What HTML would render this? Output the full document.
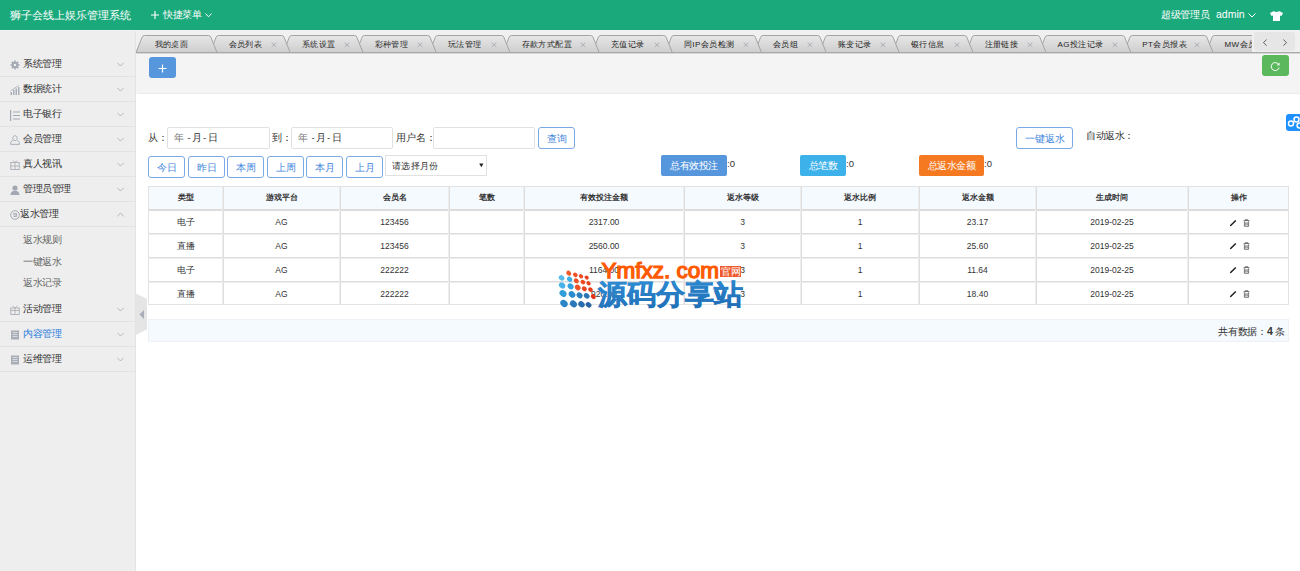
<!DOCTYPE html>
<html><head><meta charset="utf-8">
<style>
*{box-sizing:border-box;margin:0;padding:0}
html,body{width:1300px;height:571px;overflow:hidden;background:#fff;font-family:"Liberation Sans",sans-serif;color:#333}
.a{position:absolute;white-space:nowrap}
#hd{position:absolute;left:0;top:0;width:1300px;height:30px;background:#19a97b}
#hdline{position:absolute;left:0;top:30px;width:1300px;height:1px;background:#f4f1f2}
#side{position:absolute;left:0;top:31px;width:136px;height:540px;background:#eeeeee;border-right:1px solid #e3e3e3}
.mi{position:absolute;left:0;width:135px;height:25px;border-bottom:1px solid #e2e2e2}
.mi .t{position:absolute;left:23px;top:-1px;line-height:25px;font-size:10px;letter-spacing:-0.5px;color:#333}
.mi .ic{position:absolute;left:10px;top:8px}
.mi .cv{position:absolute;left:117px;top:10px}
.sub{position:absolute;left:23px;font-size:10px;letter-spacing:-0.5px;color:#666;line-height:14px}
#tabbar{position:absolute;left:136px;top:31px;width:1164px;height:22px;background:#f0f0f0}
#tabs{position:absolute;left:136px;top:31px;width:1116px;height:22px;overflow:hidden}
#tabs .tt{position:absolute;top:5px;line-height:18px;font-size:8px;letter-spacing:0.45px;color:#222;white-space:nowrap}
#tabs .x{position:absolute;top:5px;line-height:17px;font-size:11px;color:#b0b0b0}
#tabline{position:absolute;left:136px;top:52px;width:1164px;height:1px;background:#a9a9a9;border-bottom:1px solid #d6d6d6;box-sizing:content-box}
#band{position:absolute;left:136px;top:54px;width:1164px;height:40px;background:#f4f4f4;border-bottom:1px solid #ececec;border-bottom-left-radius:3px}
.btn-o{position:absolute;height:22px;border:1px solid #7aaae6;border-radius:3px;color:#3f86dd;font-size:9.5px;line-height:21px;text-align:center;background:#fff}
.inp{position:absolute;height:22px;border:1px solid #e1e1e1;border-radius:2px;background:#fff;font-size:9.5px;line-height:20px;color:#333}
.lbl{position:absolute;font-size:9.5px;color:#333;line-height:12px}
.badge{position:absolute;top:155px;height:21px;border-radius:2px;color:#fff;font-size:10px;letter-spacing:-0.5px;line-height:21px;text-align:center}
.th{position:absolute;text-align:center;font-size:8px;font-weight:bold;line-height:12px;color:#333}
.td{position:absolute;text-align:center;font-size:8.5px;line-height:12px;color:#333}
</style></head>
<body>
<div id="hd">
<div class="a" style="left:10px;top:8px;font-size:11px;line-height:14px;color:#fff">狮子会线上娱乐管理系统</div>
<svg class="a" style="left:151px;top:11px" width="8" height="8"><path d="M4 0V8M0 4H8" stroke="#fff" stroke-width="1.15"/></svg>
<div class="a" style="left:163px;top:9px;font-size:10px;letter-spacing:-0.5px;line-height:12px;color:#fff">快捷菜单</div>
<svg class="a" style="left:205px;top:13px" width="7" height="5"><path d="M0.5 0.5L3.5 3.8L6.5 0.5" stroke="#fff" fill="none" stroke-width="1"/></svg>
<div class="a" style="left:1161px;top:9px;font-size:10px;letter-spacing:-0.3px;line-height:12px;color:#fff">超级管理员</div>
<div class="a" style="left:1216px;top:8px;font-size:10.5px;line-height:13px;color:#fff">admin</div>
<svg class="a" style="left:1248px;top:13px" width="8" height="5"><path d="M0.5 0.5L4 4L7.5 0.5" stroke="#fff" fill="none" stroke-width="1"/></svg>
<svg class="a" style="left:1270px;top:11px" width="13" height="10"><path d="M4 0L0 2L1.5 5L3 4.5V10H10V4.5L11.5 5L13 2L9 0C8.5 1.2 4.5 1.2 4 0Z" fill="#fff"/></svg>
</div>
<div id="hdline"></div>
<div id="side"></div>
<div id="menu">
<div class="mi" style="top:52px"><svg class="ic" width="10" height="10" viewBox="0 0 10 10"><g fill="#a3a8b3"><circle cx="5" cy="5" r="3.3"/><rect x="4.2" y="0.5" width="1.6" height="9"/><rect x="0.5" y="4.2" width="9" height="1.6"/><rect x="4.2" y="0.5" width="1.6" height="9" transform="rotate(45 5 5)"/><rect x="4.2" y="0.5" width="1.6" height="9" transform="rotate(-45 5 5)"/></g><circle cx="5" cy="5" r="1.3" fill="#eee"/></svg><span class="t" style="color:#333">系统管理</span><svg class="cv" width="7" height="5" viewBox="0 0 7 5"><path d="M0.3 0.8 L3.5 4 L6.7 0.8" stroke="#aaa" stroke-width="0.8" fill="none"/></svg></div>
<div class="mi" style="top:77px"><svg class="ic" width="10" height="10" viewBox="0 0 10 10"><g fill="#a8adb8"><rect x="0.5" y="7" width="1.5" height="3"/><rect x="3" y="5" width="1.5" height="5"/><rect x="5.5" y="3.5" width="1.5" height="6.5"/><rect x="8" y="2" width="1.5" height="8"/></g><path d="M0.5 6L8.5 0.5" stroke="#aaa" stroke-width="0.8"/></svg><span class="t" style="color:#333">数据统计</span><svg class="cv" width="7" height="5" viewBox="0 0 7 5"><path d="M0.3 0.8 L3.5 4 L6.7 0.8" stroke="#aaa" stroke-width="0.8" fill="none"/></svg></div>
<div class="mi" style="top:102px"><svg class="ic" width="10" height="11" viewBox="0 0 10 11"><g fill="#a3a8b3"><rect x="0" y="0" width="1.2" height="11"/><rect x="3" y="1.5" width="7" height="1"/><rect x="3" y="5" width="7" height="1"/><rect x="3" y="8.5" width="7" height="1"/></g></svg><span class="t" style="color:#333">电子银行</span><svg class="cv" width="7" height="5" viewBox="0 0 7 5"><path d="M0.3 0.8 L3.5 4 L6.7 0.8" stroke="#aaa" stroke-width="0.8" fill="none"/></svg></div>
<div class="mi" style="top:127px"><svg class="ic" width="10" height="10" viewBox="0 0 10 10"><path d="M5 0.7C6.4 0.7 7.2 1.8 7.2 3.2C7.2 4.6 6.4 5.6 5 5.6C3.6 5.6 2.8 4.6 2.8 3.2C2.8 1.8 3.6 0.7 5 0.7ZM2.8 5.4L0.7 7.2V9.4H9.3V7.2L7.2 5.4" stroke="#a3a8b3" stroke-width="0.9" fill="none"/></svg><span class="t" style="color:#333">会员管理</span><svg class="cv" width="7" height="5" viewBox="0 0 7 5"><path d="M0.3 0.8 L3.5 4 L6.7 0.8" stroke="#aaa" stroke-width="0.8" fill="none"/></svg></div>
<div class="mi" style="top:152px"><svg class="ic" width="10" height="10" viewBox="0 0 10 10"><rect x="0.8" y="2.5" width="8.4" height="7" stroke="#a8adb8" stroke-width="0.9" fill="none"/><path d="M3 0.5L5 2.5L7 0.5M0.8 6H9.2M5 2.5V9.5" stroke="#aaa" stroke-width="0.8" fill="none"/></svg><span class="t" style="color:#333">真人视讯</span><svg class="cv" width="7" height="5" viewBox="0 0 7 5"><path d="M0.3 0.8 L3.5 4 L6.7 0.8" stroke="#aaa" stroke-width="0.8" fill="none"/></svg></div>
<div class="mi" style="top:177px"><svg class="ic" width="10" height="10" viewBox="0 0 10 10"><circle cx="5" cy="3" r="2.6" fill="#a3a8b3"/><path d="M0.5 10C0.5 7 2.5 5.8 5 5.8C7.5 5.8 9.5 7 9.5 10Z" fill="#a3a8b3"/></svg><span class="t" style="color:#333">管理员管理</span><svg class="cv" width="7" height="5" viewBox="0 0 7 5"><path d="M0.3 0.8 L3.5 4 L6.7 0.8" stroke="#aaa" stroke-width="0.8" fill="none"/></svg></div>
<div class="mi" style="top:202px"><svg class="ic" width="10" height="10" viewBox="0 0 10 10"><circle cx="5" cy="5" r="4.3" stroke="#9aa0ac" stroke-width="0.9" fill="none"/><path d="M3.2 3.5H6.5V6.5H3.5M3.2 5H6" stroke="#9aa0ac" stroke-width="0.8" fill="none"/></svg><span class="t" style="color:#333;left:20px">返水管理</span><svg class="cv" width="7" height="5" viewBox="0 0 7 5"><path d="M0.3 4.5 L3.5 1 L6.7 4.5" stroke="#aaa" stroke-width="0.8" fill="none"/></svg></div>
<div class="mi" style="top:297px"><svg class="ic" width="10" height="10" viewBox="0 0 10 10"><rect x="0.8" y="3" width="8.4" height="6.5" stroke="#a8adb8" stroke-width="0.9" fill="none"/><path d="M0.8 5.5H9.2M5 3V9.5M2.5 1L5 3L7.5 1" stroke="#aaa" stroke-width="0.8" fill="none"/></svg><span class="t" style="color:#333">活动管理</span><svg class="cv" width="7" height="5" viewBox="0 0 7 5"><path d="M0.3 0.8 L3.5 4 L6.7 0.8" stroke="#aaa" stroke-width="0.8" fill="none"/></svg></div>
<div class="mi" style="top:322px"><svg class="ic" width="10" height="10" viewBox="0 0 10 10"><rect x="1" y="0.5" width="8" height="9" fill="#a8adb8"/><path d="M2.5 2.5H7.5M2.5 4.5H7.5M2.5 6.5H7.5" stroke="#eee" stroke-width="0.7"/></svg><span class="t" style="color:#2b7ce0">内容管理</span><svg class="cv" width="7" height="5" viewBox="0 0 7 5"><path d="M0.3 0.8 L3.5 4 L6.7 0.8" stroke="#aaa" stroke-width="0.8" fill="none"/></svg></div>
<div class="mi" style="top:347px"><svg class="ic" width="10" height="10" viewBox="0 0 10 10"><rect x="1" y="0.5" width="8" height="9" fill="#a8adb8"/><path d="M2.5 2.5H7.5M2.5 4.5H7.5M2.5 6.5H7.5" stroke="#eee" stroke-width="0.7"/></svg><span class="t" style="color:#333">运维管理</span><svg class="cv" width="7" height="5" viewBox="0 0 7 5"><path d="M0.3 0.8 L3.5 4 L6.7 0.8" stroke="#aaa" stroke-width="0.8" fill="none"/></svg></div>
<div class="sub" style="top:233px">返水规则</div>
<div class="sub" style="top:255px">一键返水</div>
<div class="sub" style="top:276px">返水记录</div>
</div>
<svg class="a" style="left:136px;top:293px" width="12" height="43" viewBox="0 0 12 43"><path d="M0 0.5L11 6V36.5L0 42Z" fill="#e5e5e5"/><path d="M8 17L3.5 21.5L8 26Z" fill="#a8adb8"/></svg>
<div id="tabbar"></div>
<div id="tabs"><svg class="a" style="left:0;top:0" width="1116" height="23" viewBox="0 0 1116 23"><defs><linearGradient id="tg" x1="0" y1="0" x2="0" y2="1"><stop offset="0" stop-color="#e7e7e7"/><stop offset="1" stop-color="#cecece"/></linearGradient></defs><path d="M1070.0 21.5 L1076.1 6.3 Q1076.7 4.5 1078.6 4.5 L1157.4 4.5 Q1159.3 4.5 1159.9 6.3 L1166.0 21.5 Z" fill="url(#tg)" stroke="#a3a3a3" stroke-width="1"/><path d="M987.8 21.5 L993.9 6.3 Q994.5 4.5 996.4 4.5 L1068.4 4.5 Q1070.3 4.5 1070.9 6.3 L1077.0 21.5 Z" fill="url(#tg)" stroke="#a3a3a3" stroke-width="1"/><path d="M903.0 21.5 L909.1 6.3 Q909.7 4.5 911.6 4.5 L986.2 4.5 Q988.1 4.5 988.7 6.3 L994.8 21.5 Z" fill="url(#tg)" stroke="#a3a3a3" stroke-width="1"/><path d="M830.0 21.5 L836.1 6.3 Q836.7 4.5 838.6 4.5 L901.4 4.5 Q903.3 4.5 903.9 6.3 L910.0 21.5 Z" fill="url(#tg)" stroke="#a3a3a3" stroke-width="1"/><path d="M756.2 21.5 L762.3 6.3 Q762.9 4.5 764.8 4.5 L828.4 4.5 Q830.3 4.5 830.9 6.3 L837.0 21.5 Z" fill="url(#tg)" stroke="#a3a3a3" stroke-width="1"/><path d="M683.2 21.5 L689.3 6.3 Q689.9 4.5 691.8 4.5 L754.6 4.5 Q756.5 4.5 757.1 6.3 L763.2 21.5 Z" fill="url(#tg)" stroke="#a3a3a3" stroke-width="1"/><path d="M618.5 21.5 L624.6 6.3 Q625.2 4.5 627.1 4.5 L681.6 4.5 Q683.5 4.5 684.1 6.3 L690.2 21.5 Z" fill="url(#tg)" stroke="#a3a3a3" stroke-width="1"/><path d="M529.3 21.5 L535.4 6.3 Q536.0 4.5 537.9 4.5 L616.9 4.5 Q618.8 4.5 619.4 6.3 L625.5 21.5 Z" fill="url(#tg)" stroke="#a3a3a3" stroke-width="1"/><path d="M456.2 21.5 L462.3 6.3 Q462.9 4.5 464.8 4.5 L527.7 4.5 Q529.6 4.5 530.2 6.3 L536.3 21.5 Z" fill="url(#tg)" stroke="#a3a3a3" stroke-width="1"/><path d="M367.0 21.5 L373.1 6.3 Q373.7 4.5 375.6 4.5 L454.6 4.5 Q456.5 4.5 457.1 6.3 L463.2 21.5 Z" fill="url(#tg)" stroke="#a3a3a3" stroke-width="1"/><path d="M293.2 21.5 L299.3 6.3 Q299.9 4.5 301.8 4.5 L365.4 4.5 Q367.3 4.5 367.9 6.3 L374.0 21.5 Z" fill="url(#tg)" stroke="#a3a3a3" stroke-width="1"/><path d="M220.0 21.5 L226.1 6.3 Q226.7 4.5 228.6 4.5 L291.6 4.5 Q293.5 4.5 294.1 6.3 L300.2 21.5 Z" fill="url(#tg)" stroke="#a3a3a3" stroke-width="1"/><path d="M147.2 21.5 L153.3 6.3 Q153.9 4.5 155.8 4.5 L218.4 4.5 Q220.3 4.5 220.9 6.3 L227.0 21.5 Z" fill="url(#tg)" stroke="#a3a3a3" stroke-width="1"/><path d="M74.0 21.5 L80.1 6.3 Q80.7 4.5 82.6 4.5 L145.6 4.5 Q147.5 4.5 148.1 6.3 L154.2 21.5 Z" fill="url(#tg)" stroke="#a3a3a3" stroke-width="1"/><path d="M0.0 21.5 L6.1 6.3 Q6.7 4.5 8.6 4.5 L72.4 4.5 Q74.3 4.5 74.9 6.3 L81.0 21.5 Z" fill="url(#tg)" stroke="#a3a3a3" stroke-width="1"/></svg><span class="tt" style="left:18.5px">我的桌面</span><span class="tt" style="left:92.5px">会员列表</span><svg class="a" style="left:135.4px;top:11px" width="6" height="6" viewBox="0 0 6 6"><path d="M0.7 0.6L5.3 4.9M5.3 0.6L0.7 4.9" stroke="#a3a7b0" stroke-width="0.85"/></svg><span class="tt" style="left:165.7px">系统设置</span><svg class="a" style="left:208.2px;top:11px" width="6" height="6" viewBox="0 0 6 6"><path d="M0.7 0.6L5.3 4.9M5.3 0.6L0.7 4.9" stroke="#a3a7b0" stroke-width="0.85"/></svg><span class="tt" style="left:238.5px">彩种管理</span><svg class="a" style="left:281.4px;top:11px" width="6" height="6" viewBox="0 0 6 6"><path d="M0.7 0.6L5.3 4.9M5.3 0.6L0.7 4.9" stroke="#a3a7b0" stroke-width="0.85"/></svg><span class="tt" style="left:311.7px">玩法管理</span><svg class="a" style="left:355.2px;top:11px" width="6" height="6" viewBox="0 0 6 6"><path d="M0.7 0.6L5.3 4.9M5.3 0.6L0.7 4.9" stroke="#a3a7b0" stroke-width="0.85"/></svg><span class="tt" style="left:385.5px">存款方式配置</span><svg class="a" style="left:444.4px;top:11px" width="6" height="6" viewBox="0 0 6 6"><path d="M0.7 0.6L5.3 4.9M5.3 0.6L0.7 4.9" stroke="#a3a7b0" stroke-width="0.85"/></svg><span class="tt" style="left:474.7px">充值记录</span><svg class="a" style="left:517.5px;top:11px" width="6" height="6" viewBox="0 0 6 6"><path d="M0.7 0.6L5.3 4.9M5.3 0.6L0.7 4.9" stroke="#a3a7b0" stroke-width="0.85"/></svg><span class="tt" style="left:547.8px">同IP会员检测</span><svg class="a" style="left:606.7px;top:11px" width="6" height="6" viewBox="0 0 6 6"><path d="M0.7 0.6L5.3 4.9M5.3 0.6L0.7 4.9" stroke="#a3a7b0" stroke-width="0.85"/></svg><span class="tt" style="left:637.0px">会员组</span><svg class="a" style="left:671.4px;top:11px" width="6" height="6" viewBox="0 0 6 6"><path d="M0.7 0.6L5.3 4.9M5.3 0.6L0.7 4.9" stroke="#a3a7b0" stroke-width="0.85"/></svg><span class="tt" style="left:701.7px">账变记录</span><svg class="a" style="left:744.4px;top:11px" width="6" height="6" viewBox="0 0 6 6"><path d="M0.7 0.6L5.3 4.9M5.3 0.6L0.7 4.9" stroke="#a3a7b0" stroke-width="0.85"/></svg><span class="tt" style="left:774.7px">银行信息</span><svg class="a" style="left:818.2px;top:11px" width="6" height="6" viewBox="0 0 6 6"><path d="M0.7 0.6L5.3 4.9M5.3 0.6L0.7 4.9" stroke="#a3a7b0" stroke-width="0.85"/></svg><span class="tt" style="left:848.5px">注册链接</span><svg class="a" style="left:891.2px;top:11px" width="6" height="6" viewBox="0 0 6 6"><path d="M0.7 0.6L5.3 4.9M5.3 0.6L0.7 4.9" stroke="#a3a7b0" stroke-width="0.85"/></svg><span class="tt" style="left:921.5px">AG投注记录</span><svg class="a" style="left:976.0px;top:11px" width="6" height="6" viewBox="0 0 6 6"><path d="M0.7 0.6L5.3 4.9M5.3 0.6L0.7 4.9" stroke="#a3a7b0" stroke-width="0.85"/></svg><span class="tt" style="left:1006.3px">PT会员报表</span><svg class="a" style="left:1058.2px;top:11px" width="6" height="6" viewBox="0 0 6 6"><path d="M0.7 0.6L5.3 4.9M5.3 0.6L0.7 4.9" stroke="#a3a7b0" stroke-width="0.85"/></svg><span class="tt" style="left:1088.5px">MW会员报表</span><svg class="a" style="left:1147.2px;top:11px" width="6" height="6" viewBox="0 0 6 6"><path d="M0.7 0.6L5.3 4.9M5.3 0.6L0.7 4.9" stroke="#a3a7b0" stroke-width="0.85"/></svg></div>
<div id="tabline"></div>
<div id="band"></div>
<div class="a" style="left:1254px;top:32px;width:41px;height:19px;background:#e6e6e6;border-radius:3px"></div>
<svg class="a" style="left:1262px;top:39px" width="6" height="8"><path d="M4.6 0.6L1.4 3.6L4.6 6.6" stroke="#555" stroke-width="0.9" fill="none"/></svg>
<svg class="a" style="left:1282px;top:39px" width="6" height="8"><path d="M1.4 0.6L4.6 3.6L1.4 6.6" stroke="#555" stroke-width="0.9" fill="none"/></svg>
<div class="a" style="left:149px;top:57px;width:27px;height:21px;background:#5596dd;border-radius:3px"></div>
<svg class="a" style="left:158px;top:64px" width="9" height="9"><path d="M4.5 0.5V8.5M0.5 4.5H8.5" stroke="#fff" stroke-width="1.2"/></svg>
<div class="a" style="left:1262px;top:55px;width:27px;height:21px;background:#5cb85c;border-radius:3px"></div>
<svg class="a" style="left:1270px;top:61px" width="11" height="11" viewBox="0 0 11 11"><path d="M8.6 3.4A4 4 0 1 0 9.1 6.6" stroke="#fff" stroke-width="1" fill="none"/><path d="M9.6 1.6L9.5 4.6L6.6 4.2Z" fill="#fff"/></svg>
<div id="form">
<div class="lbl" style="left:148px;top:131.5px">从：</div>
<div class="inp" style="left:167px;top:127px;width:103px"><span class="a" style="left:6px;top:0;color:#777">年</span><span class="a" style="left:19.5px;top:0">-</span><span class="a" style="left:24px;top:0">月</span><span class="a" style="left:35px;top:0">-</span><span class="a" style="left:39.5px;top:0">日</span></div>
<div class="lbl" style="left:272px;top:131.5px">到：</div>
<div class="inp" style="left:291px;top:127px;width:102px"><span class="a" style="left:6px;top:0;color:#777">年</span><span class="a" style="left:19.5px;top:0">-</span><span class="a" style="left:24px;top:0">月</span><span class="a" style="left:35px;top:0">-</span><span class="a" style="left:39.5px;top:0">日</span></div>
<div class="lbl" style="left:396px;top:131.5px">用户名：</div>
<div class="inp" style="left:433px;top:127px;width:102px"></div>
<div class="btn-o" style="left:538px;top:127px;width:37px">查询</div>
<div class="btn-o" style="left:148px;top:156px;width:37px">今日</div>
<div class="btn-o" style="left:188px;top:156px;width:37px">昨日</div>
<div class="btn-o" style="left:227px;top:156px;width:37px">本周</div>
<div class="btn-o" style="left:267px;top:156px;width:37px">上周</div>
<div class="btn-o" style="left:306px;top:156px;width:37px">本月</div>
<div class="btn-o" style="left:346px;top:156px;width:37px">上月</div>
<div class="inp" style="left:385px;top:155px;width:102px;height:21px;border-radius:0;line-height:19px"><span class="a" style="left:6px;top:1px;font-size:9px;letter-spacing:0.3px">请选择月份</span><svg class="a" style="left:92.5px;top:7px" width="5" height="5"><path d="M0.2 0.4H4.4L2.3 4.3Z" fill="#222"/></svg></div>
<div class="btn-o" style="left:1016px;top:127px;width:57px">一键返水</div>
<div class="lbl" style="left:1086px;top:130px;letter-spacing:-0.4px">自动返水：</div>
<div class="badge" style="left:661px;width:66px;background:#5596dd">总有效投注</div><div class="lbl" style="left:727px;top:158px">:0</div>
<div class="badge" style="left:800px;width:46px;background:#3cb1ea">总笔数</div><div class="lbl" style="left:846px;top:158px">:0</div>
<div class="badge" style="left:919px;width:65px;background:#f47920">总返水金额</div><div class="lbl" style="left:984px;top:158px">:0</div>
<div class="a" style="left:1286px;top:114px;width:20px;height:17px;background:#1e90ff;border-radius:3px"></div>
<svg class="a" style="left:1286px;top:114px" width="14" height="17" viewBox="0 0 14 17"><circle cx="5" cy="9.5" r="2.5" stroke="#fff" stroke-width="1.5" fill="none"/><circle cx="10.5" cy="5.6" r="2.5" stroke="#fff" stroke-width="1.5" fill="none"/><circle cx="13.6" cy="11.4" r="2.5" stroke="#fff" stroke-width="1.5" fill="none"/></svg>
</div>
<div id="tbl">
<div class="a" style="left:148px;top:186px;width:1141px;height:119px;border:1px solid #e3e3e3;background:#fff"></div>
<div class="a" style="left:149px;top:187px;width:1139px;height:22px;background:#f5faff"></div>
<div class="a" style="left:149px;top:209px;width:1139px;height:2px;background:#dcdcdc"></div>
<div class="a" style="left:149px;top:233px;width:1139px;height:1px;background:#dedede;border-bottom:1px solid #ededed;box-sizing:content-box"></div>
<div class="a" style="left:149px;top:257px;width:1139px;height:1px;background:#dedede;border-bottom:1px solid #ededed;box-sizing:content-box"></div>
<div class="a" style="left:149px;top:281px;width:1139px;height:1px;background:#dedede;border-bottom:1px solid #ededed;box-sizing:content-box"></div>
<div class="a" style="left:222px;top:187px;width:1px;height:117px;background:#dedede;border-left:1px solid #ededed;box-sizing:content-box"></div>
<div class="a" style="left:339px;top:187px;width:1px;height:117px;background:#dedede;border-left:1px solid #ededed;box-sizing:content-box"></div>
<div class="a" style="left:448px;top:187px;width:1px;height:117px;background:#dedede;border-left:1px solid #ededed;box-sizing:content-box"></div>
<div class="a" style="left:523px;top:187px;width:1px;height:117px;background:#dedede;border-left:1px solid #ededed;box-sizing:content-box"></div>
<div class="a" style="left:683px;top:187px;width:1px;height:117px;background:#dedede;border-left:1px solid #ededed;box-sizing:content-box"></div>
<div class="a" style="left:800px;top:187px;width:1px;height:117px;background:#dedede;border-left:1px solid #ededed;box-sizing:content-box"></div>
<div class="a" style="left:918px;top:187px;width:1px;height:117px;background:#dedede;border-left:1px solid #ededed;box-sizing:content-box"></div>
<div class="a" style="left:1035px;top:187px;width:1px;height:117px;background:#dedede;border-left:1px solid #ededed;box-sizing:content-box"></div>
<div class="a" style="left:1187px;top:187px;width:1px;height:117px;background:#dedede;border-left:1px solid #ededed;box-sizing:content-box"></div>
<div class="th" style="left:148px;width:75px;top:192px">类型</div>
<div class="th" style="left:223px;width:117px;top:192px">游戏平台</div>
<div class="th" style="left:340px;width:109px;top:192px">会员名</div>
<div class="th" style="left:449px;width:75px;top:192px">笔数</div>
<div class="th" style="left:524px;width:160px;top:192px">有效投注金额</div>
<div class="th" style="left:684px;width:117px;top:192px">返水等级</div>
<div class="th" style="left:801px;width:118px;top:192px">返水比例</div>
<div class="th" style="left:919px;width:117px;top:192px">返水金额</div>
<div class="th" style="left:1036px;width:152px;top:192px">生成时间</div>
<div class="th" style="left:1188px;width:101px;top:192px">操作</div>
<div class="td" style="left:148px;width:75px;top:216.0px">电子</div>
<div class="td" style="left:223px;width:117px;top:216.0px">AG</div>
<div class="td" style="left:340px;width:109px;top:216.0px">123456</div>
<div class="td" style="left:524px;width:160px;top:216.0px">2317.00</div>
<div class="td" style="left:684px;width:117px;top:216.0px">3</div>
<div class="td" style="left:801px;width:118px;top:216.0px">1</div>
<div class="td" style="left:919px;width:117px;top:216.0px">23.17</div>
<div class="td" style="left:1036px;width:152px;top:216.0px">2019-02-25</div>
<svg class="a" style="left:1229px;top:218.5px" width="8" height="8" viewBox="0 0 8 8"><path d="M0.9 7.3L1.1 6.1L6.3 0.9L7.3 1.9L2.1 7.1Z" fill="#1a1a1a"/></svg>
<svg class="a" style="left:1243px;top:218.5px" width="7" height="8" viewBox="0 0 7 8"><path d="M0.6 1.6H6.4M2.4 1.6V0.7H4.6V1.6M1.4 2.3V7.3H5.6V2.3M2.8 3.3V6.3M4.2 3.3V6.3" stroke="#4a4a4a" stroke-width="0.75" fill="none"/></svg>
<div class="td" style="left:148px;width:75px;top:239.5px">直播</div>
<div class="td" style="left:223px;width:117px;top:239.5px">AG</div>
<div class="td" style="left:340px;width:109px;top:239.5px">123456</div>
<div class="td" style="left:524px;width:160px;top:239.5px">2560.00</div>
<div class="td" style="left:684px;width:117px;top:239.5px">3</div>
<div class="td" style="left:801px;width:118px;top:239.5px">1</div>
<div class="td" style="left:919px;width:117px;top:239.5px">25.60</div>
<div class="td" style="left:1036px;width:152px;top:239.5px">2019-02-25</div>
<svg class="a" style="left:1229px;top:242.0px" width="8" height="8" viewBox="0 0 8 8"><path d="M0.9 7.3L1.1 6.1L6.3 0.9L7.3 1.9L2.1 7.1Z" fill="#1a1a1a"/></svg>
<svg class="a" style="left:1243px;top:242.0px" width="7" height="8" viewBox="0 0 7 8"><path d="M0.6 1.6H6.4M2.4 1.6V0.7H4.6V1.6M1.4 2.3V7.3H5.6V2.3M2.8 3.3V6.3M4.2 3.3V6.3" stroke="#4a4a4a" stroke-width="0.75" fill="none"/></svg>
<div class="td" style="left:148px;width:75px;top:263.5px">电子</div>
<div class="td" style="left:223px;width:117px;top:263.5px">AG</div>
<div class="td" style="left:340px;width:109px;top:263.5px">222222</div>
<div class="td" style="left:524px;width:160px;top:263.5px">1164.00</div>
<div class="td" style="left:684px;width:117px;top:263.5px">3</div>
<div class="td" style="left:801px;width:118px;top:263.5px">1</div>
<div class="td" style="left:919px;width:117px;top:263.5px">11.64</div>
<div class="td" style="left:1036px;width:152px;top:263.5px">2019-02-25</div>
<svg class="a" style="left:1229px;top:266.0px" width="8" height="8" viewBox="0 0 8 8"><path d="M0.9 7.3L1.1 6.1L6.3 0.9L7.3 1.9L2.1 7.1Z" fill="#1a1a1a"/></svg>
<svg class="a" style="left:1243px;top:266.0px" width="7" height="8" viewBox="0 0 7 8"><path d="M0.6 1.6H6.4M2.4 1.6V0.7H4.6V1.6M1.4 2.3V7.3H5.6V2.3M2.8 3.3V6.3M4.2 3.3V6.3" stroke="#4a4a4a" stroke-width="0.75" fill="none"/></svg>
<div class="td" style="left:148px;width:75px;top:287.5px">直播</div>
<div class="td" style="left:223px;width:117px;top:287.5px">AG</div>
<div class="td" style="left:340px;width:109px;top:287.5px">222222</div>
<div class="td" style="left:524px;width:160px;top:287.5px">920.00</div>
<div class="td" style="left:684px;width:117px;top:287.5px">3</div>
<div class="td" style="left:801px;width:118px;top:287.5px">1</div>
<div class="td" style="left:919px;width:117px;top:287.5px">18.40</div>
<div class="td" style="left:1036px;width:152px;top:287.5px">2019-02-25</div>
<svg class="a" style="left:1229px;top:290.0px" width="8" height="8" viewBox="0 0 8 8"><path d="M0.9 7.3L1.1 6.1L6.3 0.9L7.3 1.9L2.1 7.1Z" fill="#1a1a1a"/></svg>
<svg class="a" style="left:1243px;top:290.0px" width="7" height="8" viewBox="0 0 7 8"><path d="M0.6 1.6H6.4M2.4 1.6V0.7H4.6V1.6M1.4 2.3V7.3H5.6V2.3M2.8 3.3V6.3M4.2 3.3V6.3" stroke="#4a4a4a" stroke-width="0.75" fill="none"/></svg>
<div class="a" style="left:148px;top:319px;width:1141px;height:23px;background:#f5faff;border:1px solid #edf1f5"></div>
<div class="a" style="left:1218px;top:325px;font-size:9.5px;letter-spacing:-0.2px;line-height:12px;color:#333">共有数据：<b style="font-size:10.5px">4</b> 条</div>
</div>
<svg class="a" style="left:555px;top:258px" width="45" height="54" viewBox="0 0 45 54"><ellipse cx="13.72" cy="15.14" rx="2.70" ry="2.21" fill="#f25a2c" transform="rotate(40 13.72 15.14)"/><ellipse cx="20.34" cy="16.84" rx="2.52" ry="2.07" fill="#ef4f25" transform="rotate(40 20.34 16.84)"/><ellipse cx="26.02" cy="18.16" rx="2.34" ry="1.92" fill="#ee4a22" transform="rotate(40 26.02 18.16)"/><ellipse cx="31.69" cy="19.68" rx="2.16" ry="1.77" fill="#ea3f1c" transform="rotate(40 31.69 19.68)"/><ellipse cx="6.62" cy="19.87" rx="3.06" ry="2.51" fill="#5bbcec" transform="rotate(40 6.62 19.87)"/><ellipse cx="14.66" cy="21.29" rx="2.88" ry="2.36" fill="#3aaee6" transform="rotate(40 14.66 21.29)"/><ellipse cx="21.29" cy="22.71" rx="2.70" ry="2.21" fill="#ef4f25" transform="rotate(40 21.29 22.71)"/><ellipse cx="27.91" cy="24.12" rx="2.52" ry="2.07" fill="#ee4a22" transform="rotate(40 27.91 24.12)"/><ellipse cx="33.59" cy="25.35" rx="2.34" ry="1.92" fill="#ea3f1c" transform="rotate(40 33.59 25.35)"/><ellipse cx="7.10" cy="27.44" rx="3.42" ry="2.80" fill="#48b3e8" transform="rotate(40 7.10 27.44)"/><ellipse cx="15.61" cy="28.38" rx="3.24" ry="2.66" fill="#31a2df" transform="rotate(40 15.61 28.38)"/><ellipse cx="22.71" cy="29.52" rx="3.06" ry="2.51" fill="#ef4f25" transform="rotate(40 22.71 29.52)"/><ellipse cx="29.33" cy="30.75" rx="2.70" ry="2.21" fill="#ea4520" transform="rotate(40 29.33 30.75)"/><ellipse cx="35.48" cy="31.69" rx="2.52" ry="2.07" fill="#e63a18" transform="rotate(40 35.48 31.69)"/><ellipse cx="8.04" cy="35.48" rx="3.77" ry="3.10" fill="#2f9edb" transform="rotate(40 8.04 35.48)"/><ellipse cx="17.03" cy="36.42" rx="3.60" ry="2.95" fill="#2a8ccc" transform="rotate(40 17.03 36.42)"/><ellipse cx="24.60" cy="37.37" rx="3.24" ry="2.66" fill="#2a7fc0" transform="rotate(40 24.60 37.37)"/><ellipse cx="31.69" cy="37.84" rx="3.06" ry="2.51" fill="#2a74b5" transform="rotate(40 31.69 37.84)"/><ellipse cx="38.32" cy="38.60" rx="2.70" ry="2.21" fill="#e5341a" transform="rotate(40 38.32 38.60)"/><ellipse cx="8.99" cy="45.41" rx="3.95" ry="3.25" fill="#2a86c6" transform="rotate(40 8.99 45.41)"/><ellipse cx="18.45" cy="45.88" rx="3.77" ry="3.10" fill="#2a78b9" transform="rotate(40 18.45 45.88)"/><ellipse cx="26.49" cy="46.36" rx="3.42" ry="2.80" fill="#2a6dae" transform="rotate(40 26.49 46.36)"/><ellipse cx="33.59" cy="46.83" rx="3.06" ry="2.51" fill="#2a64a4" transform="rotate(40 33.59 46.83)"/></svg>
<svg class="a" style="left:598px;top:254px" width="125" height="28" viewBox="0 0 125 28"><text x="3.5" y="23.6" font-family="Liberation Sans" font-size="21.5" fill="#ff5a00" stroke="#ff5a00" stroke-width="1.25" textLength="117.5" lengthAdjust="spacingAndGlyphs">Ymfxz. com</text></svg>
<div class="a" style="left:720px;top:266px;width:21px;height:11px;background:#ee5a2e"></div>
<div class="a" style="left:720px;top:266px;width:21px;font-size:9.5px;line-height:11px;color:#fff;text-align:center">官网</div>
<svg class="a" style="left:596px;top:275px" width="152" height="36" viewBox="0 0 152 36"><defs><linearGradient id="wg" x1="0" y1="0" x2="0.3" y2="1"><stop offset="0" stop-color="#2f8fd6"/><stop offset="1" stop-color="#2170b8"/></linearGradient></defs><text x="2" y="28.5" font-family="Liberation Sans" font-weight="700" font-size="28" fill="url(#wg)" stroke="url(#wg)" stroke-width="0.6" textLength="144.5" lengthAdjust="spacingAndGlyphs">源码分享站</text></svg>
</body></html>
